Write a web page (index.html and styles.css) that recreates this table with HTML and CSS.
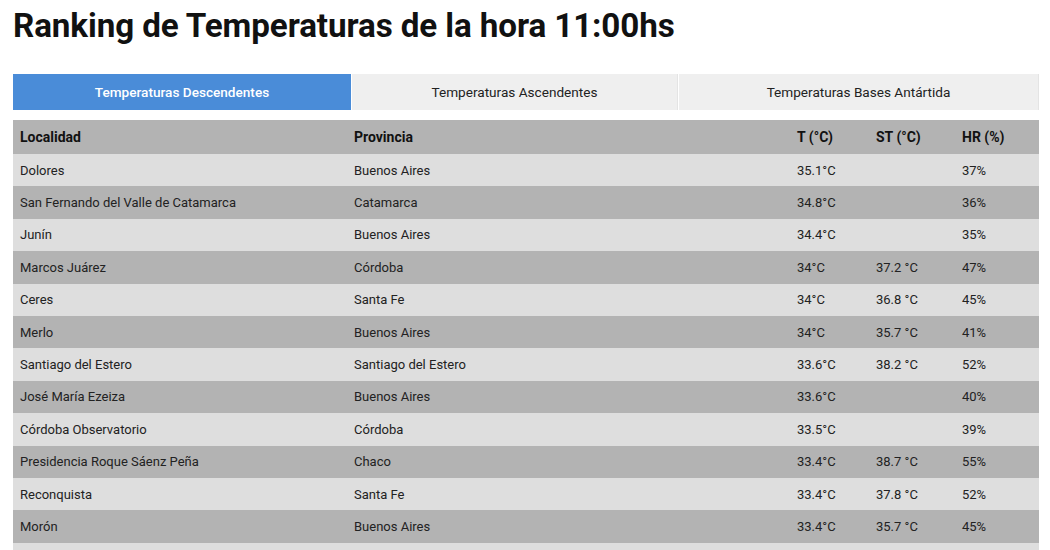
FILE: index.html
```html
<!DOCTYPE html>
<html lang="es">
<head>
<meta charset="utf-8">
<link rel="stylesheet" href="styles.css">
</head>
<body>
<div class="page">
  <h1 class="title">Ranking de Temperaturas de la hora 11:00hs</h1>
  <div class="tabs">
    <div class="tab tab-active tab-1">Temperaturas Descendentes</div>
    <div class="tab tab-2">Temperaturas Ascendentes</div>
    <div class="tab tab-3">Temperaturas Bases Antártida</div>
  </div>
  <table class="ranking">
    <thead>
      <tr><th class="c-loc">Localidad</th><th class="c-prov">Provincia</th><th class="c-t">T (°C)</th><th class="c-st">ST (°C)</th><th class="c-hr">HR (%)</th></tr>
    </thead>
    <tbody>
      <tr><td>Dolores</td><td>Buenos Aires</td><td>35.1°C</td><td></td><td>37%</td></tr>
      <tr><td>San Fernando del Valle de Catamarca</td><td>Catamarca</td><td>34.8°C</td><td></td><td>36%</td></tr>
      <tr><td>Junín</td><td>Buenos Aires</td><td>34.4°C</td><td></td><td>35%</td></tr>
      <tr><td>Marcos Juárez</td><td>Córdoba</td><td>34°C</td><td>37.2 °C</td><td>47%</td></tr>
      <tr><td>Ceres</td><td>Santa Fe</td><td>34°C</td><td>36.8 °C</td><td>45%</td></tr>
      <tr><td>Merlo</td><td>Buenos Aires</td><td>34°C</td><td>35.7 °C</td><td>41%</td></tr>
      <tr><td>Santiago del Estero</td><td>Santiago del Estero</td><td>33.6°C</td><td>38.2 °C</td><td>52%</td></tr>
      <tr><td>José María Ezeiza</td><td>Buenos Aires</td><td>33.6°C</td><td></td><td>40%</td></tr>
      <tr><td>Córdoba Observatorio</td><td>Córdoba</td><td>33.5°C</td><td></td><td>39%</td></tr>
      <tr><td>Presidencia Roque Sáenz Peña</td><td>Chaco</td><td>33.4°C</td><td>38.7 °C</td><td>55%</td></tr>
      <tr><td>Reconquista</td><td>Santa Fe</td><td>33.4°C</td><td>37.8 °C</td><td>52%</td></tr>
      <tr><td>Morón</td><td>Buenos Aires</td><td>33.4°C</td><td>35.7 °C</td><td>45%</td></tr>
      <tr><td></td><td></td><td></td><td></td><td></td></tr>
    </tbody>
  </table>
</div>
</body>
</html>
```

FILE: styles.css
```css
html, body {
  margin: 0;
  padding: 0;
  background: #ffffff;
}
body {
  font-family: Roboto, "Liberation Sans", Arial, sans-serif;
  color: #222222;
  overflow: hidden;
}
.page {
  padding: 4px 11px 0 13px;
}
.title {
  margin: 0;
  font-size: 33.2px;
  font-weight: 700;
  line-height: 44px;
  color: #111111;
  letter-spacing: -0.1px;
}
.tabs {
  display: flex;
  margin-top: 26px;
  height: 36px;
}
.tab {
  display: flex;
  align-items: center;
  justify-content: center;
  font-size: 13.6px;
  background: #efefef;
  color: #222222;
  box-sizing: border-box;
}
.tab-1 { width: 338px; }
.tab-2 { width: 326px; margin-left: 1px; border-right: 1px solid #e4e4e4; }
.tab-3 { flex: 1; margin-left: 1px; border-right: 1px solid #e4e4e4; }
.tab-active {
  background: #4a8cd8;
  color: #ffffff;
  font-weight: 500;
}
.ranking {
  margin-top: 10px;
  width: 1026px;
  border-collapse: collapse;
  table-layout: fixed;
  font-size: 13px;
}
.ranking th, .ranking td {
  text-align: left;
  padding: 0 7px;
  white-space: nowrap;
}
.ranking th {
  height: 34px;
  font-size: 14px;
  font-weight: 700;
  background: #b3b3b3;
  color: #111111;
}
.ranking td {
  height: 32.4px;
}
.ranking tbody tr:nth-child(odd) td { background: #dedede; }
.ranking tbody tr:nth-child(even) td { background: #b3b3b3; }
.c-loc { width: 320px; }
.c-prov { width: 429px; }
.c-t { width: 65px; }
.c-st { width: 72px; }
.c-hr { width: auto; }
```
